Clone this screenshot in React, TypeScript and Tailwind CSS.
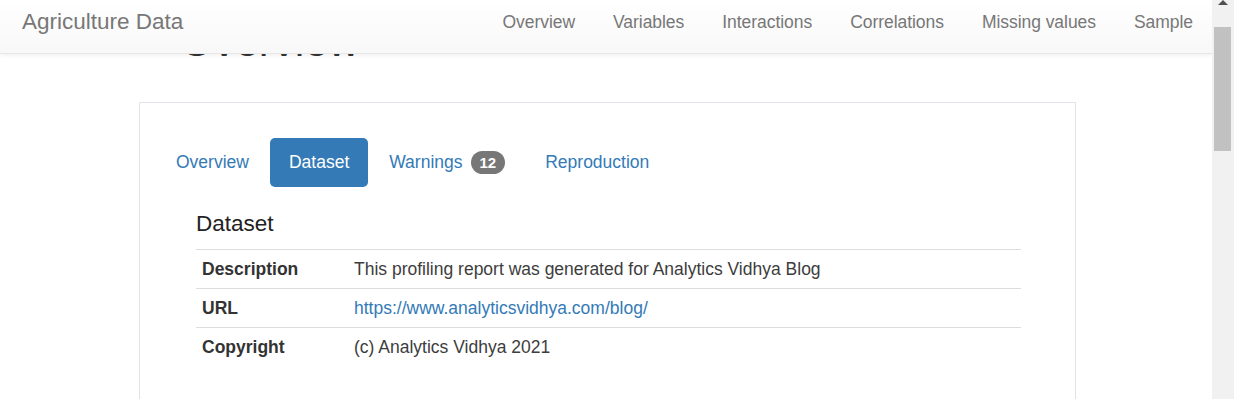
const navLinks = ["Overview", "Variables", "Interactions", "Correlations", "Missing values", "Sample"];

const rows: { label: string; value: string; href?: boolean }[] = [
  { label: "Description", value: "This profiling report was generated for Analytics Vidhya Blog" },
  { label: "URL", value: "https://www.analyticsvidhya.com/blog/", href: true },
  { label: "Copyright", value: "(c) Analytics Vidhya 2021" },
];

function Navbar() {
  return (
    <div className="absolute left-0 right-0 top-0 z-10 h-[54px] border-b border-[#e7e7e7] bg-gradient-to-b from-white to-[#f8f8f8] shadow-[0_1px_5px_rgba(0,0,0,0.075)]">
      <div className="flex h-[43px] items-center justify-between pt-[1px]">
        <span className="pl-[22px] text-[22.5px] text-[#777]">Agriculture Data</span>
        <ul className="flex">
          {navLinks.map((link) => (
            <li key={link} className="px-[19px] text-[17.5px] tracking-[-0.05px] text-[#777]">
              {link}
            </li>
          ))}
        </ul>
      </div>
    </div>
  );
}

function Pills() {
  return (
    <ul className="flex h-[49px] items-stretch gap-[2px] text-[17.5px]">
      <li className="flex items-center px-[19px] text-[#337ab7]">Overview</li>
      <li className="flex items-center rounded-[5px] bg-[#337ab7] px-[19px] text-white">Dataset</li>
      <li className="flex items-center px-[19px] text-[#337ab7]">
        Warnings
        <span className="ml-[8px] inline-flex h-[23px] items-center rounded-full bg-[#777] px-[9px] text-[15px] font-bold leading-none text-white">
          12
        </span>
      </li>
      <li className="flex items-center px-[19px] text-[#337ab7]">Reproduction</li>
    </ul>
  );
}

function DatasetTable() {
  return (
    <table className="w-full border-collapse text-[17.5px] text-[#333]">
      <tbody>
        {rows.map((row) => (
          <tr key={row.label} className="h-[39px] border-t border-[#ddd]">
            <th className="w-[158px] px-[6px] text-left font-bold">{row.label}</th>
            <td className="px-0 text-[#3d3d3d]">
              {row.href ? <a className="text-[#337ab7]">{row.value}</a> : row.value}
            </td>
          </tr>
        ))}
      </tbody>
    </table>
  );
}

function Scrollbar() {
  return (
    <div className="relative h-full w-[22px] shrink-0 bg-[#f1f1f1]">
      <svg className="absolute left-[6px] top-0" width="10" height="6" viewBox="0 0 10 6">
        <path d="M5 0 L10 5 L0 5 Z" fill="#505050" />
      </svg>
      <div className="absolute left-[2px] right-[3px] top-[27px] h-[124px] bg-[#c1c1c1]" />
    </div>
  );
}

export default function App() {
  return (
    <div className="flex h-[399px] w-full overflow-hidden bg-white font-['Liberation_Sans',Arial,sans-serif]">
      <div className="relative flex-1 overflow-hidden">
        <Navbar />
        <div className="pt-[18px]">
          <h1 className="ml-[180px] h-[47px] text-[43px] leading-[47px] text-[#333]">Overview</h1>
          <div className="ml-[139px] mt-[37px] w-[937px] border border-[#e2e2e8] px-[17px] pb-[60px] pt-[35px]">
            <Pills />
            <div className="ml-[39px] mr-[37px] mt-[24px]">
              <h4 className="text-[22.5px] leading-[25px] text-[#222]">Dataset</h4>
              <div className="mt-[13px]">
                <DatasetTable />
              </div>
            </div>
          </div>
        </div>
      </div>
      <Scrollbar />
    </div>
  );
}
